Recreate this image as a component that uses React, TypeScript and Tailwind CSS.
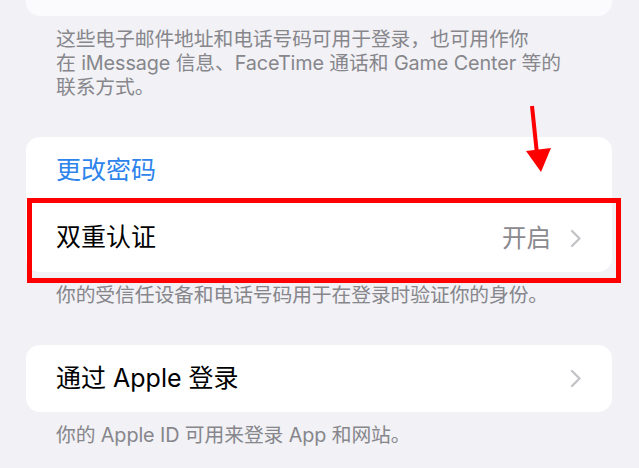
import React from "react";

const font = { fontFamily: 'Inter, "Noto Sans CJK SC", "Noto Sans", sans-serif' };

function Chevron() {
  return (
    <svg width="12" height="19" viewBox="0 0 12 19" fill="none" className="shrink-0">
      <path d="M2 2 L9.5 9.5 L2 17" stroke="#c4c4c8" strokeWidth="2.4" strokeLinecap="round" strokeLinejoin="round" />
    </svg>
  );
}

function Caption({ children }: { children: React.ReactNode }) {
  return (
    <div className="pl-[56px] pr-[60px] text-[19.8px] leading-[24px] text-[#86868b] tracking-[-0.1px]">
      {children}
    </div>
  );
}

export default function App() {
  return (
    <div className="relative w-[639px] h-[468px] overflow-hidden bg-[#f1f1f6]" style={font}>
      <div className="flex flex-col">
        {/* top card (cut off) */}
        <div className="mx-[26px] mr-[27px] h-[16px] rounded-b-[14px] bg-[#fbfbfd]" />
        <div className="mt-[11px]">
          <Caption>
            这些电子邮件地址和电话号码可用于登录，也可用作你
            <br />
            在 iMessage 信息、FaceTime 通话和 Game Center 等的
            <br />
            联系方式。
          </Caption>
        </div>

        {/* password / 2FA card */}
        <div className="mt-[38px] ml-[26px] mr-[27px] rounded-[14px] bg-white flex flex-col">
          <div className="h-[67px] flex items-center px-[30px]">
            <span className="text-[25px] text-[#2d84ec]">更改密码</span>
          </div>
          <div className="h-[68px] flex items-center px-[30px]">
            <span className="text-[25px] text-black flex-1">双重认证</span>
            <span className="text-[24.5px] text-[#8a8a8f] mr-[19px]">开启</span>
            <Chevron />
          </div>
        </div>
        <div className="mt-[11px]">
          <Caption>你的受信任设备和电话号码用于在登录时验证你的身份。</Caption>
        </div>

        {/* sign in with apple */}
        <div className="mt-[38px] ml-[26px] mr-[27px] rounded-[14px] bg-white h-[67px] flex items-center px-[30px]">
          <span className="text-[25px] text-black flex-1">通过 Apple 登录</span>
          <Chevron />
        </div>
        <div className="mt-[11px]">
          <Caption>你的 Apple ID 可用来登录 App 和网站。</Caption>
        </div>
      </div>

      {/* red highlight box */}
      <div className="absolute left-[27px] top-[198px] w-[594px] h-[85px] border-[5px] border-[#ff0000]" />

      {/* red arrow */}
      <svg className="absolute left-0 top-0" width="639" height="468" viewBox="0 0 639 468" fill="none">
        <line x1="532" y1="106" x2="537" y2="154" stroke="#ff0000" strokeWidth="4" />
        <polygon points="526,151 551,148 541,172" fill="#ff0000" />
      </svg>
    </div>
  );
}
